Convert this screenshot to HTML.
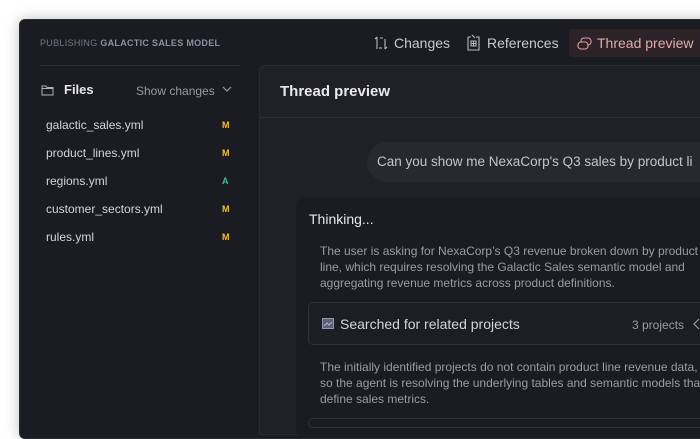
<!DOCTYPE html>
<html><head><style>
*{margin:0;padding:0;box-sizing:border-box}
body{width:700px;height:420px;background:#fff;font-family:"Liberation Sans",sans-serif;position:relative;overflow:hidden}
.win{position:absolute;left:19px;top:19px;width:700px;height:420px;background:#1b1b22;border-radius:6px;box-shadow:0 0 14px rgba(0,0,0,.25);border:1px solid #2a2a33}
.a{position:absolute;white-space:nowrap}
.pub{left:40px;top:38px;font-size:9px;color:#70768a;letter-spacing:.3px}
.pub b{color:#8a90a4}
.hr{left:40px;top:65px;width:200px;height:1px;background:#2c2c36}
.files{left:64px;top:82px;font-size:13px;font-weight:bold;color:#e4e4ea}
.show{left:136px;top:84px;font-size:12px;color:#9a9aa6}
.f{left:46px;font-size:12px;color:#d4d4dc}
.m{left:222px;font-size:9px;font-weight:bold;color:#f2c230}
.tab{top:35px;font-size:14px;color:#c8c8d0}
.act{left:569px;top:29px;width:140px;height:28px;background:#2b2328;border-radius:3px}
.main{position:absolute;left:259px;top:65px;width:460px;height:370px;background:#202028;border-radius:6px 0 0 0;border:1px solid #2a2a33}
.bub{left:367px;top:142px;width:360px;height:40px;background:#282830;border-radius:20px}
.card{left:296px;top:198px;width:420px;height:240px;background:#1b1b22;border-radius:8px}
.p{left:320px;font-size:12px;color:#9b9ba6;line-height:16px}
.box{left:308px;top:302px;width:400px;height:43px;border:1px solid #30303a;border-radius:5px;background:#1d1d24}
</style></head><body>
<div class="win"></div>
<div class="a pub">PUBLISHING <b>GALACTIC SALES MODEL</b></div>
<div class="a hr"></div>
<svg class="a" style="left:41px;top:84px" width="13" height="12" viewBox="0 0 13 12"><path d="M1 2h4l1 1.5h6V11H1z M1 4.5h11" fill="none" stroke="#b0b0ba" stroke-width="1"/></svg>
<div class="a files">Files</div>
<div class="a show">Show changes</div>
<svg class="a" style="left:222px;top:86px" width="10" height="7"><path d="M1 1l4 4 4-4" fill="none" stroke="#9a9aa6" stroke-width="1.2"/></svg>
<div class="a f" style="top:118px">galactic_sales.yml</div><div class="a m" style="top:120px">M</div>
<div class="a f" style="top:146px">product_lines.yml</div><div class="a m" style="top:148px">M</div>
<div class="a f" style="top:174px">regions.yml</div><div class="a m" style="top:176px;color:#3cc38a">A</div>
<div class="a f" style="top:202px">customer_sectors.yml</div><div class="a m" style="top:204px">M</div>
<div class="a f" style="top:230px">rules.yml</div><div class="a m" style="top:232px">M</div>
<svg class="a" style="left:374px;top:35px" width="14" height="16"><path d="M3 2v12M3 2l-2 2M11 14V4M11 14l2-2M6 3h3M5 13h3" fill="none" stroke="#b8b8c2" stroke-width="1.1"/></svg>
<div class="a tab" style="left:394px">Changes</div>
<svg class="a" style="left:466px;top:34px" width="15" height="17"><path d="M2 3h3M2 3v13h11V3h-3M5 7h5v5H5zM5 9.5h5M7.5 7v5M6 1l3 3" fill="none" stroke="#b8b8c2" stroke-width="1.1"/></svg>
<div class="a tab" style="left:487px">References</div>
<div class="a act"></div>
<svg class="a" style="left:577px;top:37px" width="15" height="13"><rect x="4" y="1" width="10" height="7" rx="3" fill="none" stroke="#e0a0a4" stroke-width="1.1"/><rect x="1" y="5" width="10" height="7" rx="3" fill="#2b2328" stroke="#e0a0a4" stroke-width="1.1"/></svg>
<div class="a tab" style="left:597px;color:#e6a8aa">Thread preview</div>
<div class="main"></div>
<div class="a" style="left:280px;top:83px;font-size:15px;font-weight:bold;color:#e8e8ee">Thread preview</div>
<div class="a" style="left:260px;top:117px;width:460px;height:1px;background:#30303a"></div>
<div class="a bub"></div>
<div class="a" style="left:377px;top:154px;font-size:13.5px;color:#c4c4cc">Can you show me NexaCorp's Q3 sales by product li</div>
<div class="a card"></div>
<div class="a" style="left:309px;top:211px;font-size:14px;color:#e8e8ee">Thinking...</div>
<div class="a p" style="top:243px">The user is asking for NexaCorp’s Q3 revenue broken down by product<br>line, which requires resolving the Galactic Sales semantic model and<br>aggregating revenue metrics across product definitions.</div>
<div class="a box"></div>
<svg class="a" style="left:322px;top:318px" width="12" height="11"><rect x=".5" y=".5" width="11" height="10" fill="#5a6078" stroke="#9098b0"/><path d="M2 8l3-3 2 2 3-3" fill="none" stroke="#c8ccd8" stroke-width=".8"/></svg>
<div class="a" style="left:340px;top:316px;font-size:14px;color:#d4d4dc">Searched for related projects</div>
<div class="a" style="left:632px;top:318px;font-size:12px;color:#9b9ba6">3 projects</div>
<svg class="a" style="left:693px;top:318px" width="8" height="12"><path d="M6 1L1 6l5 5" fill="none" stroke="#9b9ba6" stroke-width="1.2"/></svg>
<div class="a p" style="top:359px">The initially identified projects do not contain product line revenue data,<br>so the agent is resolving the underlying tables and semantic models that<br>define sales metrics.</div>
<div class="a" style="left:308px;top:418px;width:400px;height:10px;border:1px solid #30303a;border-radius:5px"></div>
</body></html>
